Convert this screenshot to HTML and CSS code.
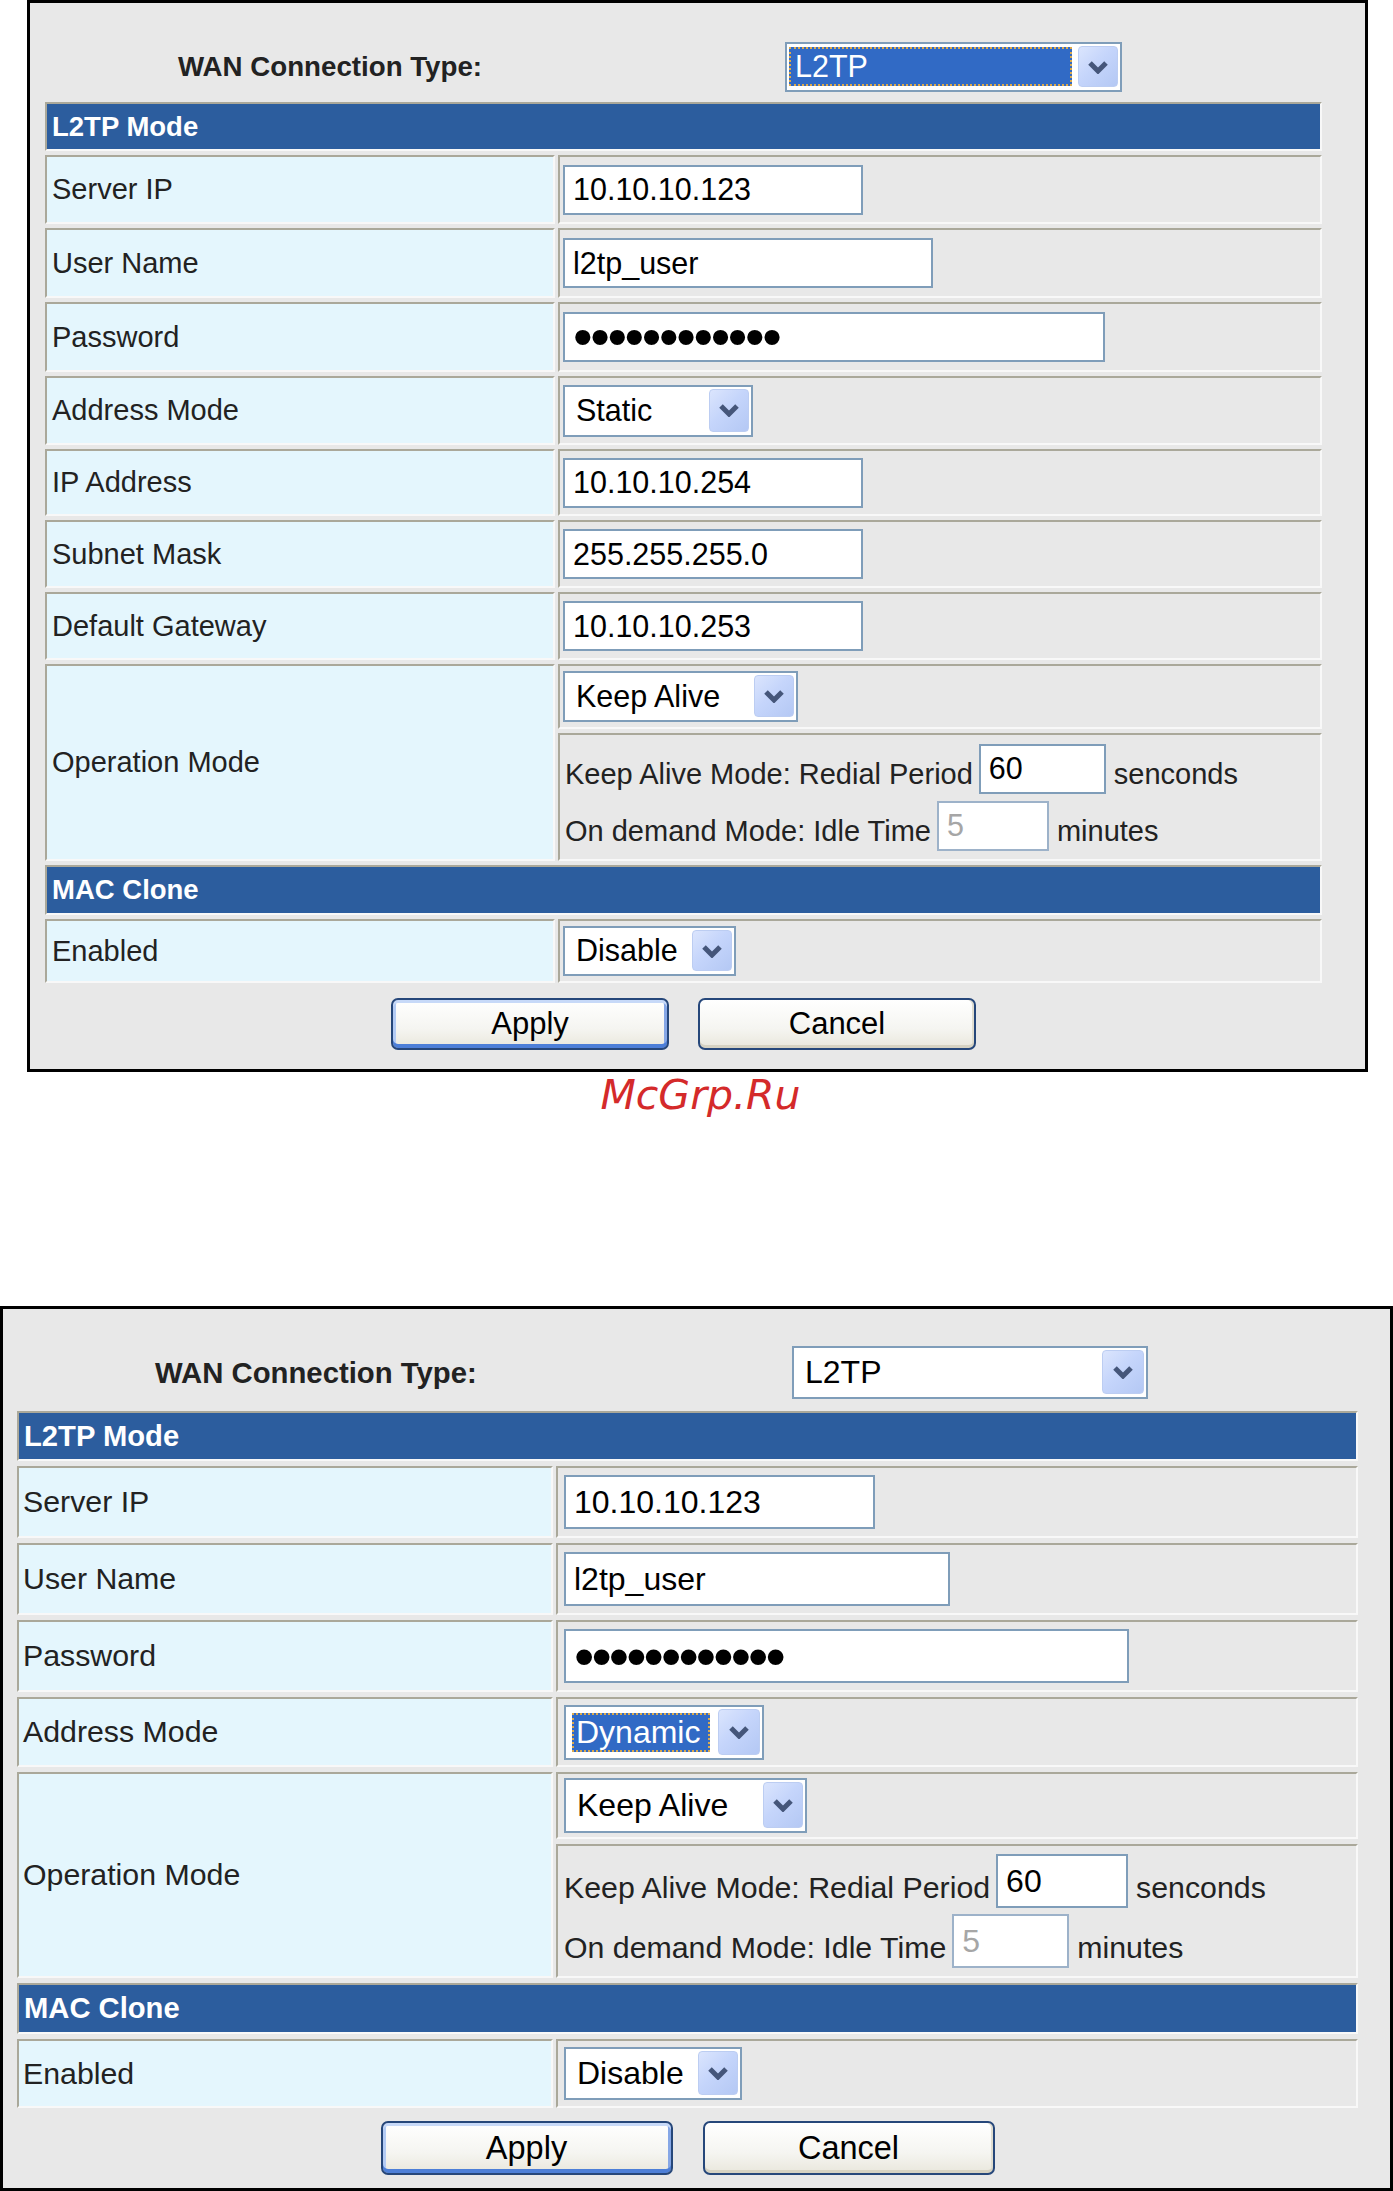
FILE: index.html
```html
<!DOCTYPE html>
<html lang="en">
<head>
<meta charset="utf-8">
<title>WAN Connection Type – L2TP</title>
<link rel="stylesheet" href="styles.css">
</head>
<body>
<div class="page">

  <section class="frame frame-a">
    <div class="wan">
      <span class="wan-label">WAN Connection Type:</span>
      <div class="select w-wan"><span class="sel-text is-focused">L2TP</span><span class="sel-btn"><svg viewBox="0 0 22 14" width="22" height="14"><path d="M3 3 L11 11 L19 3" fill="none" stroke="#45567a" stroke-width="5"/></svg></span></div>
    </div>
    <div class="form">
      <div class="cell head">L2TP Mode</div>
      <div class="cell lbl">Server IP</div>
      <div class="cell val"><div class="field w-ip">10.10.10.123</div></div>
      <div class="cell lbl">User Name</div>
      <div class="cell val"><div class="field w-user">l2tp_user</div></div>
      <div class="cell lbl">Password</div>
      <div class="cell val"><div class="field w-pass"><span class="dots">••••••••••••</span></div></div>
      <div class="cell lbl">Address Mode</div>
      <div class="cell val"><div class="select w-addr"><span class="sel-text">Static</span><span class="sel-btn"><svg viewBox="0 0 22 14" width="22" height="14"><path d="M3 3 L11 11 L19 3" fill="none" stroke="#45567a" stroke-width="5"/></svg></span></div></div>
      <div class="cell lbl">IP Address</div>
      <div class="cell val"><div class="field w-ip">10.10.10.254</div></div>
      <div class="cell lbl">Subnet Mask</div>
      <div class="cell val"><div class="field w-ip">255.255.255.0</div></div>
      <div class="cell lbl">Default Gateway</div>
      <div class="cell val"><div class="field w-ip">10.10.10.253</div></div>
      <div class="cell lbl op">Operation Mode</div>
      <div class="cell val"><div class="select w-keep"><span class="sel-text">Keep Alive</span><span class="sel-btn"><svg viewBox="0 0 22 14" width="22" height="14"><path d="M3 3 L11 11 L19 3" fill="none" stroke="#45567a" stroke-width="5"/></svg></span></div></div>
      <div class="cell val op2">
        <div class="line"><span class="txt">Keep Alive Mode: Redial Period</span><div class="field w-redial">60</div><span class="txt">senconds</span></div>
        <div class="line"><span class="txt">On demand Mode: Idle Time</span><div class="field w-idle is-disabled">5</div><span class="txt">minutes</span></div>
      </div>
      <div class="cell head">MAC Clone</div>
      <div class="cell lbl">Enabled</div>
      <div class="cell val"><div class="select w-dis"><span class="sel-text">Disable</span><span class="sel-btn"><svg viewBox="0 0 22 14" width="22" height="14"><path d="M3 3 L11 11 L19 3" fill="none" stroke="#45567a" stroke-width="5"/></svg></span></div></div>
    </div>
    <div class="actions">
      <button class="btn btn-default" type="button">Apply</button>
      <button class="btn btn-plain" type="button">Cancel</button>
    </div>
  </section>

  <p class="mark">McGrp.Ru</p>

  <section class="frame frame-b">
    <div class="wan">
      <span class="wan-label">WAN Connection Type:</span>
      <div class="select w-wan"><span class="sel-text">L2TP</span><span class="sel-btn"><svg viewBox="0 0 22 14" width="22" height="14"><path d="M3 3 L11 11 L19 3" fill="none" stroke="#45567a" stroke-width="5"/></svg></span></div>
    </div>
    <div class="form">
      <div class="cell head">L2TP Mode</div>
      <div class="cell lbl">Server IP</div>
      <div class="cell val"><div class="field w-ip">10.10.10.123</div></div>
      <div class="cell lbl">User Name</div>
      <div class="cell val"><div class="field w-user">l2tp_user</div></div>
      <div class="cell lbl">Password</div>
      <div class="cell val"><div class="field w-pass"><span class="dots">••••••••••••</span></div></div>
      <div class="cell lbl">Address Mode</div>
      <div class="cell val"><div class="select w-addr"><span class="sel-text is-focused">Dynamic</span><span class="sel-btn"><svg viewBox="0 0 22 14" width="22" height="14"><path d="M3 3 L11 11 L19 3" fill="none" stroke="#45567a" stroke-width="5"/></svg></span></div></div>
      <div class="cell lbl op">Operation Mode</div>
      <div class="cell val"><div class="select w-keep"><span class="sel-text">Keep Alive</span><span class="sel-btn"><svg viewBox="0 0 22 14" width="22" height="14"><path d="M3 3 L11 11 L19 3" fill="none" stroke="#45567a" stroke-width="5"/></svg></span></div></div>
      <div class="cell val op2">
        <div class="line"><span class="txt">Keep Alive Mode: Redial Period</span><div class="field w-redial">60</div><span class="txt">senconds</span></div>
        <div class="line"><span class="txt">On demand Mode: Idle Time</span><div class="field w-idle is-disabled">5</div><span class="txt">minutes</span></div>
      </div>
      <div class="cell head">MAC Clone</div>
      <div class="cell lbl">Enabled</div>
      <div class="cell val"><div class="select w-dis"><span class="sel-text">Disable</span><span class="sel-btn"><svg viewBox="0 0 22 14" width="22" height="14"><path d="M3 3 L11 11 L19 3" fill="none" stroke="#45567a" stroke-width="5"/></svg></span></div></div>
    </div>
    <div class="actions">
      <button class="btn btn-default" type="button">Apply</button>
      <button class="btn btn-plain" type="button">Cancel</button>
    </div>
  </section>

</div>
</body>
</html>
```

FILE: styles.css
```css
* { box-sizing: border-box; }

html, body {
  margin: 0;
  padding: 0;
  background: #ffffff;
}

body {
  font-family: "Liberation Sans", Arial, sans-serif;
  color: #222;
}

.page {
  width: 1393px;
}

/* ---------- frames ---------- */
.frame {
  border: 3px solid #000;
  background: #e8e8e8;
}

.frame-a {
  margin-left: 27px;
  width: 1341px;
  height: 1072px;
  padding-left: 15px;
  --fl: 29px;
  --fi: 30.5px;
  --fh: 27.5px;
  --fw: 27.7px;
  --fb: 31px;
  --vpad: 3px;
  --fh-h: 50px;
  --sel-h: 51px;
}

.frame-b {
  width: 1393px;
  height: 885px;
  padding-left: 14px;
  --fl: 30.3px;
  --fi: 32px;
  --fh: 29.2px;
  --fw: 29.3px;
  --fb: 32.5px;
  --vpad: 6px;
  --fh-h: 54px;
  --sel-h: 54px;
}

/* ---------- WAN type row ---------- */
.wan {
  display: flex;
  align-items: center;
}

.frame-a .wan { padding: 39px 0 10px 133px; }
.frame-b .wan { padding: 37px 0 12px 138px; }

.wan-label {
  font-size: var(--fw);
  font-weight: bold;
  color: #222;
}

.frame-a .wan-label { width: 607px; }
.frame-b .wan-label { width: 637px; }

/* ---------- form grid ---------- */
.form {
  display: grid;
  column-gap: 3px;
}

.frame-a .form {
  width: 1277px;
  grid-template-columns: 510px 764px;
  grid-template-rows: 49px 69px 70px 70px 69px 67px 68px 68px 65px 128px 50px 64px;
  row-gap: 4px;
}

.frame-b .form {
  width: 1341px;
  grid-template-columns: 536px 802px;
  grid-template-rows: 50px 72px 72px 72px 70px 67px 134px 51px 69px;
  row-gap: 5px;
}

.cell {
  border-style: solid;
  border-width: 2px;
  border-color: #aaa89a #f8f8f8 #f8f8f8 #aaa89a;
  display: flex;
  align-items: center;
}

.head {
  grid-column: 1 / -1;
  background: #2c5d9e;
  color: #fff;
  font-weight: bold;
  font-size: var(--fh);
  padding-left: 5px;
}

.lbl {
  background: #e4f6fd;
  font-size: var(--fl);
  color: #222;
  padding-left: 5px;
}

.frame-b .lbl { padding-left: 4px; }

.op { grid-row: span 2; }

.val {
  background: #e8e8e8;
  padding-left: var(--vpad);
}

.op2 {
  grid-column: 2;
  flex-direction: column;
  align-items: flex-start;
  justify-content: center;
  gap: 7px;
}

.frame-b .op2 { gap: 6px; }

.line {
  display: flex;
  align-items: flex-end;
  padding-left: 2px;
}

.frame-b .line { padding-left: 0; }

.txt {
  font-size: var(--fl);
  line-height: 1;
  padding-bottom: 5px;
  color: #222;
}

.line .field { margin: 0 8px 0 6px; }

/* ---------- text fields ---------- */
.field {
  height: var(--fh-h);
  border: 2px solid #7f9db9;
  background: #fff;
  padding-left: 8px;
  display: flex;
  align-items: center;
  font-size: var(--fi);
  color: #000;
  white-space: nowrap;
}

.field.is-disabled {
  border-color: #9db2c9;
  color: #a6a6a6;
}

.dots {
  font-size: 56px;
  line-height: 1;
  letter-spacing: -2.4px;
  color: #000;
}

.frame-b .dots {
  font-size: 58px;
  letter-spacing: -2.9px;
}

.frame-a .w-ip { width: 300px; }
.frame-a .w-user { width: 370px; }
.frame-a .w-pass { width: 542px; }
.frame-a .w-redial { width: 127px; }
.frame-a .w-idle { width: 112px; }

.frame-b .w-ip { width: 311px; }
.frame-b .w-user { width: 386px; }
.frame-b .w-pass { width: 565px; }
.frame-b .w-redial { width: 132px; }
.frame-b .w-idle { width: 117px; }

/* ---------- select boxes ---------- */
.select {
  height: var(--sel-h);
  border: 2px solid #7f9db9;
  background: #fff;
  padding: 2px 2px 3px 2px;
  display: flex;
  font-size: var(--fi);
  color: #000;
}

.sel-text {
  flex: 1;
  display: flex;
  align-items: center;
  padding-left: 9px;
  white-space: nowrap;
}

.sel-text.is-focused {
  background: #316ac5;
  color: #fff;
  border: 2px dotted #dcaa4c;
  margin: 1px 6px 1px 0;
  padding-left: 4px;
}

.sel-btn {
  width: 40px;
  border-radius: 4px;
  border: 1px solid #bccdf2;
  background: linear-gradient(135deg, #dbe5fd 0%, #c5d5fb 45%, #b4c8f4 100%);
  display: flex;
  align-items: center;
  justify-content: center;
}

.frame-a .w-wan { width: 337px; height: 50px; }
.frame-b .w-wan { width: 356px; height: 53px; }
.frame-b .w-wan .sel-btn { width: 42px; }

.frame-a .w-addr { width: 190px; height: 52px; }
.frame-a .w-keep { width: 235px; }
.frame-a .w-dis { width: 173px; height: 50px; }

.frame-b .w-addr { width: 200px; height: 55px; }
.frame-b .w-addr .sel-btn { width: 42px; }
.frame-b .w-addr .sel-text.is-focused { margin: 4px 8px 3px 4px; padding-left: 2px; }
.frame-b .w-keep { width: 243px; height: 55px; }
.frame-b .w-dis { width: 178px; height: 53px; }

/* ---------- buttons ---------- */
.actions {
  display: flex;
  justify-content: center;
}

.frame-a .actions {
  width: 1277px;
  margin-top: 15px;
  gap: 29px;
}

.frame-b .actions {
  width: 1341px;
  margin-top: 13px;
  gap: 30px;
}

.btn {
  font-family: "Liberation Sans", Arial, sans-serif;
  font-size: var(--fb);
  color: #000;
  border: 2px solid #26477a;
  border-radius: 7px;
  background: linear-gradient(#ffffff, #f5f5f1 60%, #e9e7dc);
  padding: 0;
  cursor: pointer;
}

.frame-a .btn { width: 278px; height: 52px; }
.frame-b .btn { width: 292px; height: 54px; }

.btn-default {
  box-shadow:
    inset 0 3px 0 #c7d9f8,
    inset 0 -4px 0 #4d7fd8,
    inset 3px 0 0 #b3cbf4,
    inset -3px 0 0 #86a7e6;
}

.btn-plain {
  box-shadow:
    inset 0 -3px 0 #d6d2c2,
    inset -2px 0 0 #e0ddd0;
}

/* ---------- watermark ---------- */
.mark {
  margin: 3px 0 190px;
  padding-left: 8px;
  text-align: center;
  font-family: "DejaVu Sans", sans-serif;
  font-style: italic;
  font-size: 41px;
  line-height: 41px;
  color: #d42a2a;
}
```
